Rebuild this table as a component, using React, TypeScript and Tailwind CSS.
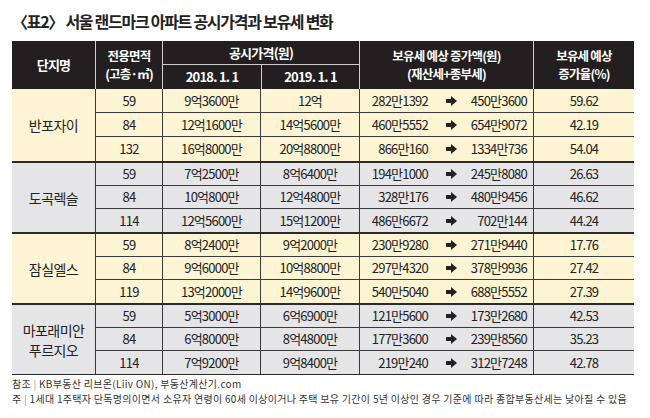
const font = { fontFamily: '"Noto Sans CJK KR", "Noto Sans", sans-serif' };

type Row = {
  area: string;
  p2018: string;
  p2019: string;
  from: string;
  to: string;
  rate: string;
};

type Group = {
  name: string[];
  bg: string;
  heights: string[];
  rows: Row[];
};

const groups: Group[] = [
  {
    name: ["반포자이"],
    bg: "bg-[#fcf4d2]",
    heights: ["h-[24px]", "h-[24px]", "h-[24px]"],
    rows: [
      { area: "59", p2018: "9억3600만", p2019: "12억", from: "282만1392", to: "450만3600", rate: "59.62" },
      { area: "84", p2018: "12억1600만", p2019: "14억5600만", from: "460만5552", to: "654만9072", rate: "42.19" },
      { area: "132", p2018: "16억8000만", p2019: "20억8800만", from: "866만160", to: "1334만736", rate: "54.04" },
    ],
  },
  {
    name: ["도곡렉슬"],
    bg: "bg-[#e5e5e7]",
    heights: ["h-[23px]", "h-[23px]", "h-[23px]"],
    rows: [
      { area: "59", p2018: "7억2500만", p2019: "8억6400만", from: "194만1000", to: "245만8080", rate: "26.63" },
      { area: "84", p2018: "10억800만", p2019: "12억4800만", from: "328만176", to: "480만9456", rate: "46.62" },
      { area: "114", p2018: "12억5600만", p2019: "15억1200만", from: "486만6672", to: "702만144", rate: "44.24" },
    ],
  },
  {
    name: ["잠실엘스"],
    bg: "bg-[#fcf4d2]",
    heights: ["h-[23px]", "h-[23px]", "h-[23px]"],
    rows: [
      { area: "59", p2018: "8억2400만", p2019: "9억2000만", from: "230만9280", to: "271만9440", rate: "17.76" },
      { area: "84", p2018: "9억6000만", p2019: "10억8800만", from: "297만4320", to: "378만9936", rate: "27.42" },
      { area: "119", p2018: "13억2000만", p2019: "14억9600만", from: "540만5040", to: "688만5552", rate: "27.39" },
    ],
  },
  {
    name: ["마포래미안", "푸르지오"],
    bg: "bg-[#e5e5e7]",
    heights: ["h-[23px]", "h-[23px]", "h-[23px]"],
    rows: [
      { area: "59", p2018: "5억3000만", p2019: "6억6900만", from: "121만5600", to: "173만2680", rate: "42.53" },
      { area: "84", p2018: "6억8000만", p2019: "8억4800만", from: "177만3600", to: "239만8560", rate: "35.23" },
      { area: "114", p2018: "7억9200만", p2019: "9억8400만", from: "219만240", to: "312만7248", rate: "42.78" },
    ],
  },
];

const Arrow = () => (
  <svg width="11" height="10" viewBox="0 0 11 10" className="shrink-0">
    <rect x="0" y="3" width="6" height="4" fill="#222" />
    <polygon points="5,0 11,5 5,10" fill="#222" />
  </svg>
);

const DataRow = ({ row, h, last }: { row: Row; h: string; last: boolean }) => (
  <div className={`flex ${h} ${last ? "" : "border-b border-[#3a3a3a]"} items-center text-[13px] tracking-[-0.06em] text-[#222]`}>
    <div className="w-[67px] h-full flex items-center justify-center border-l border-[#3a3a3a]">{row.area}</div>
    <div className="w-[98px] h-full flex items-center justify-center border-l border-[#3a3a3a]">{row.p2018}</div>
    <div className="w-[99px] h-full flex items-center justify-center border-l border-[#3a3a3a]">{row.p2019}</div>
    <div className="w-[174px] h-full flex items-center border-l border-[#3a3a3a]">
      <span className="w-[68px] text-right">{row.from}</span>
      <span className="ml-[18px]">
        <Arrow />
      </span>
      <span className="flex-1 text-right pr-[6px]">{row.to}</span>
    </div>
    <div className="w-[101px] h-full flex items-center justify-center border-l border-[#3a3a3a]">{row.rate}</div>
  </div>
);

export default function App() {
  return (
    <div className="w-[650px] h-[418px] bg-white pl-[12px]" style={font}>
      <h1 className="pt-[12px] h-[41px] text-[16px] font-bold text-[#222] tracking-[-0.08em] leading-[18px]">
        〈표2〉 서울 랜드마크 아파트 공시가격과 보유세 변화
      </h1>

      <div className="w-[622px]">
        <div className="flex h-[48px] bg-[#231f20] text-white font-bold text-[13px] leading-[16px] tracking-[-0.06em]">
          <div className="w-[83px] flex items-center justify-center">단지명</div>
          <div className="w-[67px] flex flex-col items-center justify-center border-l border-[#cfcfcf] text-[12.5px] leading-[18px]">
            <span>전용면적</span>
            <span>(고층·㎡)</span>
          </div>
          <div className="w-[197px] flex flex-col border-l border-[#cfcfcf]">
            <div className="h-[24px] flex items-center justify-center border-b border-[#cfcfcf]">공시가격(원)</div>
            <div className="flex-1 flex">
              <div className="w-[98px] flex items-center justify-center">2018. 1. 1</div>
              <div className="flex-1 flex items-center justify-center border-l border-[#cfcfcf]">2019. 1. 1</div>
            </div>
          </div>
          <div className="w-[174px] flex flex-col items-center justify-center border-l border-[#cfcfcf] text-[12.5px] leading-[18px]">
            <span>보유세 예상 증가액(원)</span>
            <span>(재산세+종부세)</span>
          </div>
          <div className="w-[101px] flex flex-col items-center justify-center border-l border-[#cfcfcf] text-[12.5px] leading-[18px]">
            <span>보유세 예상</span>
            <span>증가율(%)</span>
          </div>
        </div>

        {groups.map((g, gi) => (
          <div key={gi} className={`flex ${g.bg} ${gi > 0 ? "border-t-2 border-[#2a2a2a]" : ""}`}>
            <div className="w-[83px] flex flex-col items-center justify-center text-[14px] leading-[20px] tracking-[-0.04em] text-[#222]">
              {g.name.map((n) => (
                <span key={n}>{n}</span>
              ))}
            </div>
            <div className="flex flex-col">
              {g.rows.map((r, ri) => (
                <DataRow key={ri} row={r} h={g.heights[ri]} last={ri === g.rows.length - 1} />
              ))}
            </div>
          </div>
        ))}
        <div className="border-t border-[#2a2a2a]" />
      </div>

      <div className="mt-[1px] text-[10px] leading-[15px] tracking-[0.03em] text-[#333]">
        <p>
          참조 <span className="text-[#999]">|</span> KB부동산 리브온(Liiv ON), 부동산계산기.com
        </p>
        <p>
          주 <span className="text-[#999]">|</span> 1세대 1주택자 단독명의이면서 소유자 연령이 60세 이상이거나 주택 보유 기간이 5년 이상인 경우 기준에 따라 종합부동산세는 낮아질 수 있음
        </p>
      </div>
    </div>
  );
}
